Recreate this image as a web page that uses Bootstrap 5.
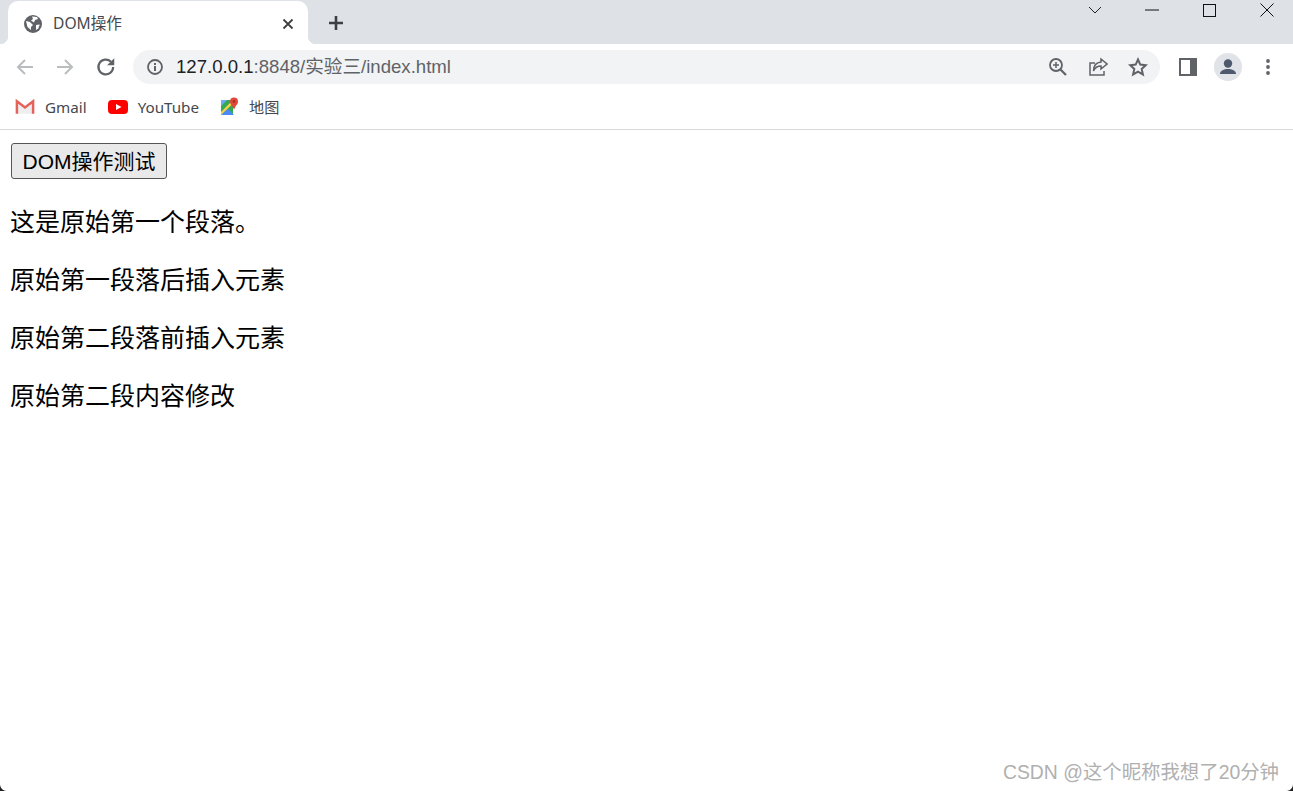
<!DOCTYPE html>
<html lang="zh-CN">
<head>
<meta charset="utf-8">
<title>DOM操作</title>
<link href="https://cdn.jsdelivr.net/npm/bootstrap@5.3.0/dist/css/bootstrap.min.css" rel="stylesheet">
<style>
html,body{height:100%;}
body{width:1293px;height:791px;overflow:hidden;background:#fff;color:#000;font-family:"Liberation Sans","Noto Sans CJK SC",sans-serif;}
.shell{height:791px;}
.shell::before,.shell::after{content:"";position:absolute;bottom:0;width:7px;height:7px;}
.shell::before{left:0;background:radial-gradient(circle at 100% 0,transparent 6.500px,#222 7.500px);}
.shell::after{right:0;background:radial-gradient(circle at 0 0,transparent 6.500px,#222 7.500px);}
.tabstrip{height:44px;background:#dee1e6;}
.tabshape{width:300px;height:43px;margin-top:1px;margin-left:8px;background:#fff;border-radius:10px 10px 0 0;padding:2px 14px 0 16px;position:relative;}
.tabshape::before,.tabshape::after{content:"";position:absolute;bottom:0;width:8px;height:8px;}
.tabshape::before{left:-8px;background:radial-gradient(circle at 0 0,#dee1e6 8px,#fff 8.500px);}
.tabshape::after{right:-8px;background:radial-gradient(circle at 100% 0,#dee1e6 8px,#fff 8.500px);}
.tabtitle{font-size:15.600px;color:#45494d;margin-left:11px;font-family:"Noto Sans","Noto Sans CJK SC",sans-serif;}
.newtab{margin-left:18px;margin-top:1px;width:20px;}
.winbtns{margin-left:auto;margin-right:-3px;height:20px;}
.winbtn{width:57.500px;height:20px;}
.toolbar{height:44px;padding-left:15px;padding-right:15px;padding-top:1px;}
.navicon{width:20px;height:20px;margin-right:20px;}
.reloadicon{width:22px;height:22px;margin-left:0;margin-right:16px;}
.omnibox{width:1027px;height:34px;border-radius:17px;background:#f1f3f4;padding-left:14px;padding-right:12px;}
.urlhost{font-size:18.600px;color:#202124;margin-left:13px;}
.urlrest{color:#5f6368;}
.omniicons{margin-left:auto;gap:20px;}
.sideicons{margin-left:19px;}
.sideavatar{margin-left:17px;}
.sidedots{margin-left:23px;}
.bookmarks{height:42px;border-bottom:1px solid #d8d9db;padding-left:15px;padding-bottom:3px;gap:21px;}
.bmitem{font-size:15.200px;color:#45494d;gap:10px;font-family:"Noto Sans","Noto Sans CJK SC",sans-serif;}
.pagebody{padding:13px 10px 0;}
.nativebtn{display:block;width:156px;height:36px;margin-left:1px;padding:0;font-size:21px;line-height:1;color:#000;background:#e9e9e9;border:1px solid #555;border-radius:3px;font-family:"Liberation Sans","Noto Sans CJK SC",sans-serif;}
.para{font-size:25px;line-height:33px;margin:0 0 25px;}
.firstpara{margin-top:27px;}
.watermark{position:absolute;right:14px;bottom:7px;font-size:19.400px;line-height:24px;color:#b0b0b0;}
</style>
</head>
<body>
<div class="shell d-flex flex-column position-relative">
  <div class="tabstrip d-flex align-items-start">
    <div class="tabshape d-flex align-items-center">
      <svg width="18" height="18" viewBox="0 0 18 18"><circle cx="9" cy="9" r="9" fill="#5f6368"/><path d="M2 6l4 1 3 3-2 2v3L3.500 12zM8 1.500l5 .5 1 2-3 1-1 2.500-3-2 2-1.500zM12 10l3.800-.5-1.500 4-2.300 1.500z" fill="#fff"/></svg>
      <span class="tabtitle">DOM操作</span>
      <svg class="ms-auto" width="12" height="12" viewBox="0 0 12 12"><path d="M1.500 1.500l9 9M10.500 1.500l-9 9" stroke="#3c4043" stroke-width="1.800"/></svg>
    </div>
    <svg class="newtab align-self-center" width="20" height="20" viewBox="0 0 20 20"><path d="M10 3v14M3 10h14" stroke="#3c4043" stroke-width="2.600"/></svg>
    <div class="winbtns d-flex align-items-center">
      <div class="winbtn d-flex align-items-center justify-content-center"><svg width="14" height="8" viewBox="0 0 14 8"><path d="M1 1l6 6 6-6" fill="none" stroke="#222" stroke-width="1"/></svg></div>
      <div class="winbtn d-flex align-items-center justify-content-center"><svg width="14" height="2" viewBox="0 0 14 2"><path d="M0 1h14" stroke="#111" stroke-width="1"/></svg></div>
      <div class="winbtn d-flex align-items-center justify-content-center"><svg width="13" height="13" viewBox="0 0 13 13"><rect x=".5" y=".5" width="12" height="12" fill="none" stroke="#111"/></svg></div>
      <div class="winbtn d-flex align-items-center justify-content-center"><svg width="14" height="14" viewBox="0 0 14 14"><path d="M.5.500l13 13M13.500.500l-13 13" stroke="#111" stroke-width="1"/></svg></div>
    </div>
  </div>
  <div class="toolbar d-flex align-items-center">
    <svg class="navicon" viewBox="0 0 20 20"><path d="M18 10H3M10 3l-7 7 7 7" fill="none" stroke="#babcbe" stroke-width="2"/></svg>
    <svg class="navicon" viewBox="0 0 20 20"><path d="M2 10h15M10 3l7 7-7 7" fill="none" stroke="#babcbe" stroke-width="2"/></svg>
    <svg class="reloadicon" viewBox="0 0 20 20"><path d="M16.500 10a6.700 6.700 0 1 1-2-4.800" fill="none" stroke="#5f6368" stroke-width="2"/><path d="M17.500 2v6.500H11z" fill="#5f6368"/></svg>
    <div class="omnibox d-flex align-items-center">
      <svg width="16" height="16" viewBox="0 0 16 16"><circle cx="8" cy="8" r="7" fill="none" stroke="#5f6368" stroke-width="1.800"/><path d="M8 7v5M8 4v2" stroke="#5f6368" stroke-width="2"/></svg>
      <span class="urlhost">127.0.0.1<span class="urlrest">:8848/实验三/index.html</span></span>
      <div class="omniicons d-flex align-items-center">
        <svg width="20" height="20" viewBox="0 0 20 20"><circle cx="8" cy="8" r="6" fill="none" stroke="#5f6368" stroke-width="1.800"/><path d="M12.500 12.500l5.500 5.500" stroke="#5f6368" stroke-width="2.200"/><path d="M8 5v6M5 8h6" stroke="#5f6368" stroke-width="1.500"/></svg>
        <svg width="20" height="20" viewBox="0 0 20 20"><path d="M7 6H2v12h14v-4" fill="none" stroke="#5f6368" stroke-width="1.500"/><path d="M13 2l6 5-6 5V9C9 9 7 10.500 5.500 14 5.500 9 8 5.500 13 5z" fill="none" stroke="#5f6368" stroke-width="1.500"/></svg>
        <svg width="20" height="20" viewBox="0 0 20 20"><path d="M10 2.500l2.300 5.100 5.500.6-4.100 3.700 1.200 5.500L10 14.600l-4.900 2.800 1.200-5.500-4.100-3.700 5.500-.6z" fill="none" stroke="#5f6368" stroke-width="2"/></svg>
      </div>
    </div>
    <div class="sideicons d-flex align-items-center">
      <svg width="18" height="18" viewBox="0 0 18 18"><rect x="1" y="1" width="16" height="16" fill="none" stroke="#5f6368" stroke-width="2"/><rect x="11" y="1" width="6" height="16" fill="#5f6368"/></svg>
      <svg class="sideavatar" width="28" height="28" viewBox="0 0 28 28"><circle cx="14" cy="14" r="14" fill="#e0e3e8"/><circle cx="14" cy="10.500" r="4.200" fill="#4d5a6e"/><path d="M6 21c0-3.500 4-5 8-5s8 1.500 8 5z" fill="#4d5a6e"/></svg>
      <svg class="sidedots" width="6" height="18" viewBox="0 0 6 18"><circle cx="3" cy="3" r="1.900" fill="#5f6368"/><circle cx="3" cy="9" r="1.900" fill="#5f6368"/><circle cx="3" cy="15" r="1.900" fill="#5f6368"/></svg>
    </div>
  </div>
  <div class="bookmarks d-flex align-items-center">
    <div class="bmitem d-flex align-items-center">
      <svg width="20" height="16" viewBox="0 0 21 16"><path d="M2 2v13h17V2l-8.500 6.500z" fill="#eee"/><path d="M2 15V2l8.500 6.500L19 2v13" fill="none" stroke="#e5625a" stroke-width="2.600"/></svg>
      <span>Gmail</span>
    </div>
    <div class="bmitem d-flex align-items-center">
      <svg width="20" height="14" viewBox="0 0 20 14"><rect width="20" height="14" rx="4" fill="#f00"/><path d="M8 4l5.500 3L8 10z" fill="#fff"/></svg>
      <span>YouTube</span>
    </div>
    <div class="bmitem d-flex align-items-center">
      <svg width="19" height="19" viewBox="0 0 19 19"><path d="M1 3h12v15H1z" fill="#34a853"/><path d="M1 18l6.500-6.500L14 18z" fill="#4a8af4"/><path d="M1 15L11 5l2.500 1L1 18z" fill="#fbd14b"/><path d="M1 3h6L1 9z" fill="#6fa8f5"/><circle cx="14" cy="4.500" r="4" fill="#e1483b"/><path d="M10.800 6.500l3.200 6 3.200-6z" fill="#e1483b"/><circle cx="14" cy="4.500" r="1.300" fill="#a52a20"/></svg>
      <span>地图</span>
    </div>
  </div>
  <main class="pagebody">
    <button type="button" class="nativebtn">DOM操作测试</button>
    <p class="para firstpara">这是原始第一个段落。</p>
    <p class="para">原始第一段落后插入元素</p>
    <p class="para">原始第二段落前插入元素</p>
    <p class="para">原始第二段内容修改</p>
  </main>
  <div class="watermark">CSDN @这个昵称我想了20分钟</div>
</div>
<script src="https://cdn.jsdelivr.net/npm/bootstrap@5.3.0/dist/js/bootstrap.bundle.min.js"></script>
</body>
</html>
